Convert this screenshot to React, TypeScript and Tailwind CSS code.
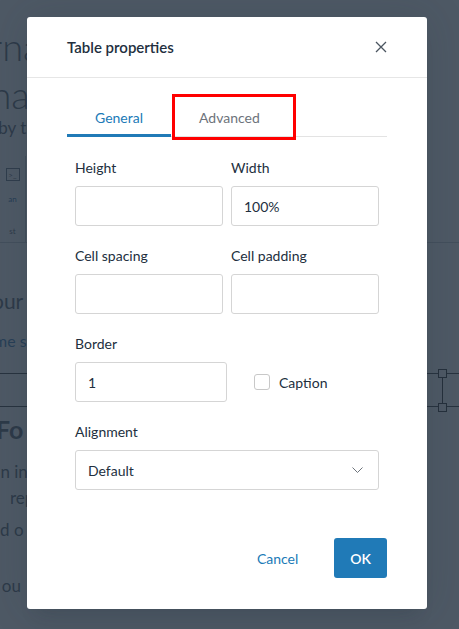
import { ReactNode } from "react";

function Field({ label, value, className }: { label: string; value?: string; className?: string }) {
  return (
    <div className={`flex flex-col ${className ?? ""}`}>
      <label className="mb-2 text-[14px] leading-5 text-[#222f3e]">{label}</label>
      <div className="flex h-10 items-center rounded-[3px] border border-[#d5d5d5] bg-white px-3 text-[14px] text-[#222f3e]">
        {value}
      </div>
    </div>
  );
}

function Tab({ children, active }: { children: ReactNode; active?: boolean }) {
  return (
    <div
      className={`-mb-px border-b-[3px] px-7 pt-[10px] pb-[6px] text-[14px] leading-5 ${
        active ? "border-[#207ab7] text-[#207ab7]" : "border-transparent text-[#6d737b]"
      }`}
    >
      {children}
    </div>
  );
}

function Page() {
  // page content behind the modal, only the edges show
  return (
    <div className="flex flex-col text-[#5d6670]">
      <div className="-ml-[44px] mt-[20px] text-[38px] font-light leading-[52px]">ternary</div>
      <div className="-ml-[30px] text-[38px] font-light leading-[44px]">final</div>
      <div className="-ml-[12px] text-[17px] leading-6">r by the</div>
      <div className="mt-[16px] flex h-[87px] border-b border-[#c9ced3]">
        <div className="flex w-[26px] flex-col items-center border-r border-[#c9ced3] pt-[12px]">
          <div className="flex h-[13px] w-[14px] items-center justify-center border border-[#6b7480] text-[8px] leading-none">
            &gt;_
          </div>
          <div className="mt-[12px] text-[8px] text-[#2f6fa6]">an</div>
          <div className="mt-[20px] text-[8px]">st</div>
        </div>
      </div>
      <div className="-ml-[8px] mt-[44px] text-[21px] leading-7">our</div>
      <div className="-ml-[6px] mt-[14px] text-[16px] leading-6 text-[#3f7fb5]">me s</div>
      <div className="mt-[20px] h-[34px] border-y border-[#444]" />
      <div className="-ml-[4px] mt-[6px] text-[25px] font-bold leading-8">Fo</div>
      <div className="-ml-[8px] mt-[14px] text-[17px] leading-[26px]">an in</div>
      <div className="ml-[10px] text-[17px] leading-[26px]">rep</div>
      <div className="-ml-[4px] mt-[6px] text-[17px] leading-[26px]">ld o</div>
      <div className="-ml-[12px] mt-[30px] text-[17px] leading-[26px]">n ou</div>
    </div>
  );
}

export default function App() {
  return (
    <div className="relative h-[629px] w-[459px] overflow-hidden bg-white font-[Lato,sans-serif]">
      <Page />

      {/* table resize handles on the right edge */}
      <div className="absolute left-[438px] top-[369px] h-[9px] w-[9px] border border-[#333] bg-white" />
      <div className="absolute left-[442px] top-[378px] h-[25px] w-px bg-[#333]" />
      <div className="absolute left-[438px] top-[403px] h-[9px] w-[9px] border border-[#333] bg-white" />

      {/* backdrop */}
      <div className="absolute inset-0 bg-[#222f3e]/80 pl-[27px] pt-[17px]">
        <div className="flex h-[592px] w-[400px] flex-col rounded-[3px] bg-white shadow-[0_16px_16px_-10px_rgba(34,47,62,0.15),0_0_40px_1px_rgba(34,47,62,0.15)]">
          {/* header */}
          <div className="flex h-[61px] items-center justify-between border-b border-[#e6e6e6] px-10">
            <div className="text-[15px] font-semibold text-[#222f3e]">Table properties</div>
            <svg width="12" height="12" viewBox="0 0 12 12" className="text-[#4b5560]">
              <path d="M1 1l10 10M11 1L1 11" stroke="currentColor" strokeWidth="1.3" />
            </svg>
          </div>

          {/* body */}
          <div className="px-10 pt-5">
            <div className="relative flex border-b border-[#e3e3e3]">
              <Tab active>General</Tab>
              <Tab>Advanced</Tab>
              <div className="absolute left-[105px] top-[-4px] h-[46px] w-[124px] border-[3px] border-[#ff0000]" />
            </div>

            <div className="flex flex-col gap-5 px-2 pt-[21px]">
              <div className="grid grid-cols-2 gap-2">
                <Field label="Height" />
                <Field label="Width" value="100%" />
              </div>
              <div className="grid grid-cols-2 gap-2">
                <Field label="Cell spacing" />
                <Field label="Cell padding" />
              </div>
              <div className="flex items-end">
                <Field label="Border" value="1" className="w-[152px]" />
                <div className="ml-[27px] flex h-10 items-center gap-[9px]">
                  <div className="h-4 w-4 rounded-[3px] border border-[#c8c8c8] bg-white" />
                  <span className="text-[14px] text-[#222f3e]">Caption</span>
                </div>
              </div>
              <div className="flex flex-col">
                <label className="mb-2 text-[14px] leading-5 text-[#222f3e]">Alignment</label>
                <div className="flex h-10 items-center justify-between rounded-[3px] border border-[#d5d5d5] pl-3 pr-[15px] text-[14px] text-[#222f3e]">
                  <span>Default</span>
                  <svg width="11" height="6" viewBox="0 0 11 6" className="text-[#6d737b]">
                    <path d="M0.5 0.5l5 5 5-5" fill="none" stroke="currentColor" strokeWidth="1" />
                  </svg>
                </div>
              </div>
            </div>
          </div>

          {/* footer */}
          <div className="mt-auto flex items-center justify-end gap-5 px-10 pb-[31px]">
            <button className="h-10 px-4 text-[14px] text-[#207ab7]">Cancel</button>
            <button className="h-10 rounded-[3px] bg-[#207ab7] px-4 text-[14px] font-semibold text-white">OK</button>
          </div>
        </div>
      </div>
    </div>
  );
}
